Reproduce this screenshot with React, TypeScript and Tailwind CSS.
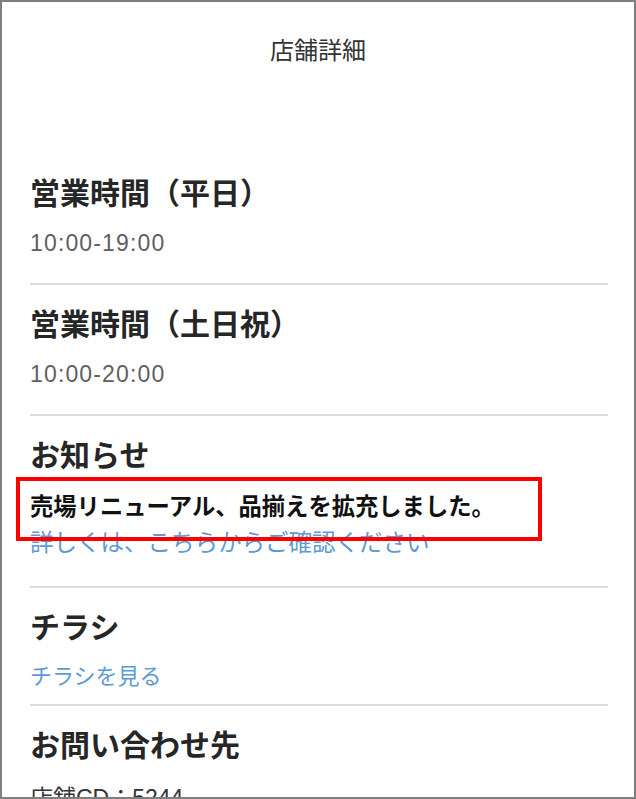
import React from 'react';

const jp = { fontFamily: '"Liberation Sans", "Noto Sans CJK JP", sans-serif' };

const Section: React.FC<{ title: string; className?: string; children: React.ReactNode }> = ({ title, className, children }) => (
    <div className={`pt-[20px] border-b-2 border-[#dddddd] ${className || ''}`}>
        <h2 className="h-[40px] leading-[40px] text-[30px] font-semibold text-[#262626]">{title}</h2>
        {children}
    </div>
);

const App: React.FC = () => {
    return (
        <div className="relative w-[636px] h-[799px] overflow-hidden bg-white border-2 border-[#7f7f7f]" style={jp}>
            <header className="h-[98px] flex items-center justify-center text-[24px] text-[#333333]">
                店舗詳細
            </header>

            <div className="mt-[54px] ml-[28px] mr-[26px]">
                <Section title="営業時間（平日）" className="pb-[24px]">
                    <p className="mt-[13px] leading-[32px] text-[23px] tracking-[0.05em] text-[#5f5f5f]">10:00-19:00</p>
                </Section>

                <Section title="営業時間（土日祝）" className="pb-[24px]">
                    <p className="mt-[13px] leading-[32px] text-[23px] tracking-[0.05em] text-[#5f5f5f]">10:00-20:00</p>
                </Section>

                <Section title="お知らせ" className="pb-[27px]">
                    <p className="mt-[15px] leading-[32px] text-[23.3px] font-bold text-[#111111]">
                        売場リニューアル、品揃えを拡充しました。
                    </p>
                    <p className="mt-[4px] leading-[32px] text-[23.5px] text-[#5c9bd6]">
                        詳しくは、こちらからご確認ください
                    </p>
                </Section>

                <Section title="チラシ" className="pb-[11px]">
                    <p className="mt-[13px] leading-[32px] text-[22px] text-[#5c9bd6]">チラシを見る</p>
                </Section>

                <div className="pt-[20px]">
                    <h2 className="h-[40px] leading-[40px] text-[30px] font-semibold text-[#262626]">お問い合わせ先</h2>
                    <p className="mt-[16px] leading-[32px] text-[23px] text-[#333333]">店舗CD：5244</p>
                </div>
            </div>

            {/* annotation box */}
            <div className="absolute left-[14px] top-[475px] w-[526px] h-[64px] border-4 border-[#ff0000]" />
        </div>
    );
};

export default App;
